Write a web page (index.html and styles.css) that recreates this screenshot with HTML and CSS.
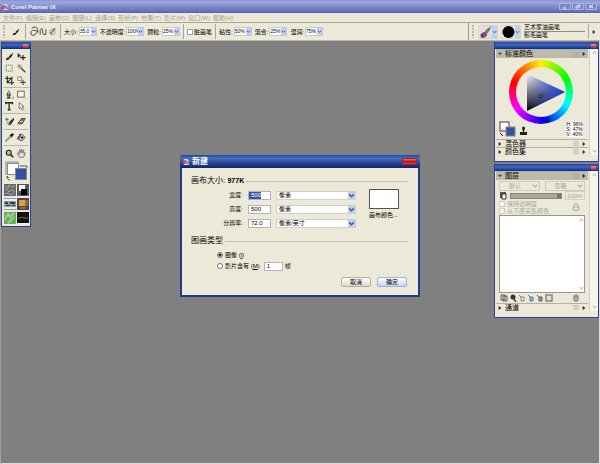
FILE: index.html
```html
<!DOCTYPE html>
<html lang="zh-CN">
<head>
<meta charset="utf-8">
<title>Corel Painter IX</title>
<link rel="stylesheet" href="styles.css">
</head>
<body>
<svg class="defs" aria-hidden="true">
  <defs>
    <symbol id="brush" viewBox="0 0 12 12"><path d="M11 1 7 4 5 6l2 2 2-2zM5 7 2 8 1 11l4-1 2-2z" fill="#222"/></symbol>
    <symbol id="chev" viewBox="0 0 6 6"><path d="M1 2l2 2 2-2" fill="none" stroke="#35549a" stroke-width="1.2"/></symbol>
    <symbol id="box" viewBox="0 0 6 6"><path d="M.5.5h5v5h-5zM2 2l2 2M4 2 2 4" fill="none" stroke="#99978a" stroke-width=".6"/></symbol>
    <symbol id="play" viewBox="0 0 6 6"><path d="M1 0v6l4-3z" fill="#222"/></symbol>
    <symbol id="logo" viewBox="0 0 8 8"><path d="M1 1h4l2 2v5H1z" fill="#e8d8e4"/><path d="M0 3h3v4H0z" fill="#b34a60"/><path d="M4 3h3v4H4z" fill="#d98ea0"/><path d="M2 2l4 5" stroke="#553a62"/></symbol>
  </defs>
</svg>
<div class="app">
  <header class="titlebar">
    <svg class="logo"><use href="#logo"/></svg>
    <h1>Corel Painter IX</h1>
    <div class="winbtns">
      <button aria-label="最小化"><svg viewBox="0 0 8 5"><path d="M2 4h3" stroke="#fff"/></svg></button>
      <button aria-label="还原"><svg viewBox="0 0 8 5"><path d="M2 2h3v2H2zM4 1h2v2" stroke="#fff" fill="none" stroke-width=".7"/></svg></button>
      <button aria-label="关闭"><svg viewBox="0 0 8 5"><path d="M2 1l4 3M6 1 2 4" stroke="#fff"/></svg></button>
    </div>
  </header>
  <nav class="menu">
    <a href="#">文件(F)</a><a href="#">编辑(E)</a><a href="#">画布(C)</a><a href="#">图层(L)</a><a href="#">选择(S)</a><a href="#">形状(P)</a><a href="#">效果(T)</a><a href="#">影片(M)</a><a href="#">窗口(W)</a><a href="#">帮助(H)</a>
  </nav>
  <div class="toolbar">
    <div class="options">
      <i class="grip"></i>
      <svg class="ic wide"><use href="#brush"/></svg>
      <i class="vsep"></i>
      <svg class="strokes" viewBox="0 0 30 14"><path d="M3 3c3-3 8 0 6 4s-7 5-7 1 5-3 8-1" fill="none" stroke="#333"/><path d="M12 10V5l2-2 1 6 3 1V4" fill="none" stroke="#444"/><circle cx="25" cy="7" r="3" fill="none" stroke="#999"/><path d="M28 3 23 9" stroke="#666" stroke-width="1.5"/></svg>
      <i class="vsep"></i>
      <label class="field">大小: <span class="spin"><input value="35.0"><svg><use href="#chev"/></svg></span></label>
      <label class="field">不透明度: <span class="spin"><input value="100%"><svg><use href="#chev"/></svg></span></label>
      <label class="field">颗粒: <span class="spin"><input value="25%"><svg><use href="#chev"/></svg></span></label>
      <i class="vsep"></i>
      <label class="field"><input type="checkbox" class="check">脏画笔</label>
      <i class="vsep"></i>
      <label class="field">粘性: <span class="spin"><input value="50%"><svg><use href="#chev"/></svg></span></label>
      <label class="field">混合: <span class="spin"><input value="25%"><svg><use href="#chev"/></svg></span></label>
      <label class="field">湿润: <span class="spin"><input value="75%"><svg><use href="#chev"/></svg></span></label>
    </div>
    <div class="selector">
      <i class="grip"></i>
      <button class="pick" aria-label="画笔类别"><svg class="art" viewBox="0 0 14 14"><rect width="14" height="14" fill="#dedee2"/><path d="M14 0 8 4 5 8l3 2 4-5z" fill="#8a7468"/><path d="M5 7 1 10l1 4 5-1 2-3z" fill="#4c4a8c"/><path d="M5 8l4 2-2 3-3-2z" fill="#b8404c"/></svg><svg class="dd"><use href="#chev"/></svg></button>
      <button class="pick" aria-label="画笔变体"><svg class="art" viewBox="0 0 14 14"><circle cx="7" cy="7" r="7"/></svg><svg class="dd"><use href="#chev"/></svg></button>
      <div class="names"><span>艺术家油画笔</span><span>鬃毛画笔</span></div>
      <i class="vsep"></i>
      <svg class="go"><use href="#play"/></svg>
    </div>
  </div>
  <main class="desk">
    <section class="win tools" aria-label="工具箱">
      <div class="cap"><button class="x" aria-label="关闭"></button></div>
      <div class="toolbody">
        <div class="tgrid">
          <svg viewBox="0 0 12 12"><use href="#brush"/></svg>
          <svg viewBox="0 0 12 12"><path d="M1 1v7l2-2h3z" fill="#222"/><path d="M8 4v7M4.500 7.500h7" stroke="#222" stroke-width="1.500"/></svg>
          <svg viewBox="0 0 12 12"><path d="M1.500 1.500h8v8h-8z" fill="none" stroke="#555" stroke-dasharray="1.500 1"/><path d="M10 11h1v-1z"/></svg>
          <svg viewBox="0 0 12 12"><path d="M5 5l6 6" stroke="#333" stroke-width="1.500"/><path d="M3 0v7M0 3h7M1 1l4 4M5 1 1 5" stroke="#666" stroke-width=".7"/></svg>
          <svg viewBox="0 0 12 12"><path d="M3 0v9h9M0 3h9v9M10 1 3 9" fill="none" stroke="#222" stroke-width="1.400"/></svg>
          <svg viewBox="0 0 12 12"><path d="M1 1h5v5H1z" fill="none" stroke="#777"/><path d="M8 5v7M4.500 8.500h7" stroke="#444" stroke-width="1.400"/></svg>
        </div>
        <div class="tgrid">
          <svg viewBox="0 0 12 12"><path d="M5 0 2 6l1 3h4l1-3z" fill="#555"/><path d="M5 2v4" stroke="#fff"/><path d="M3 10h4v1H3zM10 11h1v-1z" stroke="#222" stroke-width=".6"/></svg>
          <svg viewBox="0 0 12 12"><path d="M.7 1.500h9v8h-9z" fill="#f8f5e8" stroke="#444"/><path d="M10.500 11.500h1v-1z"/></svg>
          <svg viewBox="0 0 12 12"><path d="M1 3V1h9v2M5.500 1v9M3.500 10.500h4" fill="none" stroke="#222" stroke-width="1.700"/></svg>
          <svg viewBox="0 0 12 12"><path d="M3 1v8l2-2 2 4 1.500-1L7 6h2z" fill="#fff" stroke="#444" stroke-width=".9"/><path d="M10.500 11.500h1v-1z"/></svg>
        </div>
        <div class="tgrid">
          <svg viewBox="0 0 12 12"><path d="M12 1 7 5 4 11l4-1 4-6z" fill="#333"/><path d="M0 3h5M2.500 1v5M5 6 3 9" stroke="#444"/><path d="M10.500 11.500h1v-1z"/></svg>
          <svg viewBox="0 0 12 12"><path d="M6 2h5L7 9H1z" fill="#777" stroke="#333"/><path d="M4 6h4" stroke="#eee"/></svg>
        </div>
        <div class="tgrid">
          <svg viewBox="0 0 12 12"><path d="M7 4 2 9l-1 2 2-1 5-5" fill="#fff" stroke="#444"/><path d="M6 3l3 3 3-4-2-2z" fill="#222"/></svg>
          <svg viewBox="0 0 12 12"><path d="M2 5l4-4 5 5-4 4H4z" fill="#ccc" stroke="#333"/><path d="M2 5 1 9M4 1v5" stroke="#222" stroke-width="1.400"/><circle cx="7" cy="6" r="1.500"/></svg>
        </div>
        <div class="tgrid">
          <svg viewBox="0 0 12 12"><circle cx="5" cy="5" r="3.300" fill="#bbb" stroke="#222" stroke-width="1.500"/><path d="M7.500 7.500 11 11" stroke="#222" stroke-width="2"/></svg>
          <svg viewBox="0 0 12 12"><path d="M3 11 0 6l2-1 1 2V2l1-1 1 4 1-5 1 5 2-4v5l2-1-2 6z" fill="#ddd" stroke="#444" stroke-width=".8"/></svg>
        </div>
        <svg class="fgbg" viewBox="0 0 24 20"><path d="M1 14V1h13" fill="none" stroke="#888"/><rect x="2.500" y="2.500" width="11" height="11" fill="#fff" stroke="#888"/><rect x="10.500" y="7.500" width="11" height="11" fill="#3450a4" stroke="#888"/><path d="M15 5h7v2M2 15v2l2 2h1M2 15l2 2" fill="none" stroke="#555"/></svg>
        <div class="tex">
          <svg viewBox="0 0 12 12"><rect width="12" height="12" fill="#686b6c"/><path d="M1 2l3 2 1-3 3 2 3-1M1 6l2-1 2 3 3-2 3 2M1 10l3-1 2 2 4-2" stroke="#a2a5a2" fill="none"/></svg>
          <svg viewBox="0 0 12 12"><rect width="12" height="12" fill="#55585c"/><path d="M2 1h6v6H2z" fill="#fff"/><path d="M4 5h6v6H4z"/></svg>
          <svg viewBox="0 0 12 12"><rect width="12" height="12" fill="#8e9d9d"/><path d="M0 1h12v2H0zM0 9h12v2H0z" fill="#e9ece8"/><path d="M1 4h3v2H1zM6 4h5v2H6zM2 7h4v1H2zM8 7h3v1H8z" fill="#31424a"/></svg>
          <svg viewBox="0 0 12 12"><rect width="12" height="12" fill="#5a3a5f"/><path d="M2 2h6v6H2z" fill="#d8ac20"/><path d="M8 2h3v6H8zM3 9h6v2H3z" fill="#8a7048"/></svg>
          <svg viewBox="0 0 12 12"><rect width="12" height="12" fill="#6fae60"/><path d="M1 8l3-6 2 3 4-4M4 11l6-6" stroke="#a5d794" stroke-width="1.500" fill="none"/></svg>
          <svg viewBox="0 0 12 12"><rect width="12" height="12" fill="#111"/><path d="M1 6h3l1-1 2 1h4" stroke="#627062" fill="none"/><path d="M0 11.500h12" stroke="#eee"/></svg>
        </div>
      </div>
    </section>

    <div class="dock">
      <section class="win">
        <div class="cap"><button class="x" aria-label="关闭"></button></div>
        <div class="panel">
          <div class="content">
            <h2 class="bar open"><svg class="tri" viewBox="0 0 6 6"><path d="M0 1h6L3 5z" fill="#444"/></svg><span>标准颜色</span><svg><use href="#box"/></svg><svg><use href="#play"/></svg></h2>
            <div class="colors">
              <div class="wheel"><svg viewBox="0 0 64 64">
                <defs><linearGradient id="tb" x1="0" y1="0" x2="1" y2="0"><stop offset="0" stop-color="#1a3cc8" stop-opacity="0"/><stop offset="1" stop-color="#1b3ed8"/></linearGradient><linearGradient id="tg" x1="0" y1="0" x2="0" y2="1"><stop offset="0" stop-color="#f4f6fc"/><stop offset="1" stop-color="#000"/></linearGradient></defs>
                <circle cx="32" cy="32" r="25" fill="#ece9d8"/>
                <path d="M18 14v37l38-19z" fill="url(#tg)"/><path d="M18 14v37l38-19z" fill="url(#tb)"/>
                <circle cx="32" cy="36" r="1.800" fill="none" stroke="#222" stroke-width=".8"/><circle cx="39" cy="60" r="2" fill="none" stroke="#001"/></svg></div>
              <svg class="cs" viewBox="0 0 28 16"><rect x="1" y="1" width="9" height="9" fill="#fff" stroke="#777" stroke-width="1.500"/><rect x="7" y="6" width="9" height="9" fill="#3450a4" stroke="#888"/><path d="M1 12l3 3" stroke="#222"/><path d="M23 7a1.500 1.500 0 0 1 3 0l-1 4h3v3h-7v-3h3z" fill="#222"/></svg>
              <div class="hsv"><span>H: 96%</span><span>S: 47%</span><span>V: 40%</span></div>
            </div>
            <h2 class="bar"><svg class="tri"><use href="#play"/></svg><span>混色器</span><svg><use href="#box"/></svg><svg><use href="#play"/></svg></h2>
            <h2 class="bar"><svg class="tri"><use href="#play"/></svg><span>颜色集</span><svg><use href="#box"/></svg><svg><use href="#play"/></svg></h2>
          </div>
          <div class="scroll"><i></i><i></i></div>
        </div>
        <div class="foot"></div>
      </section>

      <section class="win">
        <div class="cap"><button class="x" aria-label="关闭"></button></div>
        <div class="panel">
          <div class="content">
            <h2 class="bar open"><svg class="tri" viewBox="0 0 6 6"><path d="M0 1h6L3 5z" fill="#444"/></svg><span>图层</span><svg><use href="#box"/></svg><svg><use href="#play"/></svg></h2>
            <div class="layers">
              <div class="pair">
                <span class="drop"><select aria-label="混合方式" disabled><option>默认</option></select><svg><use href="#chev"/></svg></span>
                <span class="drop"><select aria-label="混合深度" disabled><option>忽略</option></select><svg><use href="#chev"/></svg></span>
              </div>
              <div class="opacity">
                <svg viewBox="0 0 8 8"><path d="M1 0h6v6H1z" fill="#555"/><path d="M3 2h4v5H3z" fill="#fff" stroke="#333"/></svg>
                <input type="range" aria-label="不透明度" value="100" disabled>
                <input class="pct" aria-label="不透明度值" value="100%" disabled>
              </div>
              <div class="locks">
                <div><label><input type="checkbox" class="check" disabled>保持透明度</label><label><input type="checkbox" class="check" disabled>从下层采集颜色</label></div>
                <svg viewBox="0 0 8 8"><path d="M1 4h6v3H1zM2 4V2l1-1h2l1 1v2" fill="none" stroke="#aaa798"/></svg>
              </div>
              <div class="list"><div class="scroll plain"><i></i><i></i></div></div>
              <div class="acts">
                <svg viewBox="0 0 8 8"><path d="M1 1h4v5H1zM3 2h4v5H3z" fill="#ddd" stroke="#444" stroke-width=".8"/></svg>
                <svg viewBox="0 0 8 8"><circle cx="4" cy="3" r="2.500" fill="#333"/><path d="M4 4l3 4" stroke="#444" stroke-width="1.500"/></svg>
                <svg viewBox="0 0 8 8"><path d="M1 1l2 2M3 3h3v4H3z" fill="#eee" stroke="#888"/></svg>
                <svg viewBox="0 0 8 8"><path d="M1 1l2 2M3 3h3v4H3z" fill="#8bb5d2" stroke="#5583a2"/></svg>
                <svg viewBox="0 0 8 8"><path d="M1 1l2 2M3 3h3v4H3z" fill="#89a" stroke="#566"/></svg>
                <svg viewBox="0 0 8 8"><path d="M1 1h6v6H1z" fill="#ddd" stroke="#888" stroke-width="1.500"/></svg>
                <svg class="trash" viewBox="0 0 8 8"><path d="M1 2h6M3 1h2M2 3h4v4H2zM4 3v4" fill="none" stroke="#777"/></svg>
              </div>
            </div>
            <h2 class="bar"><svg class="tri"><use href="#play"/></svg><span>通道</span><svg><use href="#box"/></svg><svg><use href="#play"/></svg></h2>
          </div>
          <div class="scroll"><i></i><i></i></div>
        </div>
        <div class="foot"></div>
      </section>
    </div>

    <form class="dialog" role="dialog" aria-label="新建">
      <div class="dcap"><svg class="logo"><use href="#logo"/></svg><strong>新建</strong><button type="button" class="x" aria-label="关闭"></button></div>
      <div class="dbody">
        <h2 class="rule"><span>画布大小: <b>977K</b></span></h2>
        <div class="size">
          <div class="rows">
            <label for="w">宽度:</label><input id="w" class="sel" value="500"><span class="combo"><select aria-label="宽度单位"><option>像素</option></select><svg><use href="#chev"/></svg></span>
            <label for="h">高度:</label><input id="h" value="500"><span class="combo"><select aria-label="高度单位"><option>像素</option></select><svg><use href="#chev"/></svg></span>
            <label for="r">分辨率:</label><input id="r" value="72.0"><span class="combo"><select aria-label="分辨率单位"><option>像素/英寸</option></select><svg><use href="#chev"/></svg></span>
          </div>
          <button type="button" class="paper"><i></i>画布颜色...</button>
        </div>
        <h2 class="rule second"><span>图画类型</span></h2>
        <div class="types">
          <label><input type="radio" name="t" checked><span>图像 (<u>I</u>)</span></label>
          <div class="movie"><label><input type="radio" name="t"><span>影片含有 (<u>M</u>)</span></label><input id="frames" value="1"><label for="frames">帧</label></div>
        </div>
        <div class="btns"><button type="button">取消</button><button type="button" class="ok">确定</button></div>
      </div>
    </form>
  </main>
</div>
</body>
</html>
```
FILE: styles.css
```css
* { box-sizing: border-box; }
html, body { height: 100%; margin: 0; }
body, input, button, select {
  font-family: "Liberation Sans", "Noto Sans CJK SC", sans-serif;
  font-size: 6px;
  line-height: 8px;
  color: #000;
}
input, button, select { margin: 0; padding: 0; border: 0; border-radius: 0; appearance: none; background: none; }
h1, h2 { margin: 0; font-weight: normal; }
svg { display: block; flex: none; }
.defs { position: absolute; width: 0; height: 0; }
.app { display: flex; flex-direction: column; min-height: 100vh; background: #ece9d8; }

.titlebar {
  display: flex; align-items: center; gap: 2px; height: 13px; padding: 0 3px 0 2px;
  background: linear-gradient(#8796d6, #99a6dd 20%, #7986c9 55%, #6670b4 90%, #535ba0);
}
.logo { width: 7px; height: 7px; }
.titlebar h1 { flex: 1; font-size: 6px; line-height: 10px; font-weight: bold; color: #f1f3ff; }
.winbtns { display: flex; gap: 1px; }
.winbtns button { width: 12px; height: 7px; border: 1px solid #aab3e2; border-radius: 1px; background: #7b87c6; }
.winbtns svg { width: 10px; height: 5px; }
.menu { display: flex; align-items: center; gap: 3px; height: 9px; padding: 0 3px; }
.menu a { min-width: 20px; color: #a5a294; text-decoration: none; white-space: nowrap; }

.toolbar { display: flex; height: 19px; border-top: 1px solid #aaa798; border-bottom: 1px solid #bbb8a8; }
.options { flex: 1; display: flex; align-items: center; gap: 3px; padding-left: 3px; }
.grip { width: 3px; height: 13px; background: radial-gradient(circle at 1px 1px, #bdb9a7 1px, transparent 1px) 0 0 / 3px 3px; }
.ic { width: 8px; height: 8px; }
.ic.wide { margin: 0 2px 0 3px; }
.vsep { width: 1px; height: 15px; background: #aaa798; }
.strokes { width: 28px; height: 14px; }
.field { display: flex; align-items: center; gap: 1px; white-space: nowrap; }
.spin { display: flex; height: 9px; border: 1px solid #c5cad2; background: #fff; }
.spin input { width: 11px; font-size: 5px; line-height: 7px; }
.spin svg, .dd { width: 5px; background: #bdd0f8; height: 100%; }
.check { width: 6px; height: 6px; border: 1px solid #999f9f; background: #fff; }
.selector { display: flex; align-items: center; gap: 3px; width: 132px; padding: 0 4px 0 3px; border-left: 1px solid #999688; }
.pick { display: flex; height: 14px; border: 1px solid #d5d5cf; background: #ece9d8; }
.pick .art { width: 13px; height: 12px; }
.names { flex: 1; display: flex; flex-direction: column; line-height: 7px; }
.names span + span { border-top: 1px solid #8f8c7e; }
.go { width: 4px; height: 6px; }

.desk { flex: 1; position: relative; background: #808080; border: solid #dddcd2; border-width: 0 1px 1px 0; border-left: 1px solid #a5a293; }
.win { background: #ece9d8; border: 1px solid #29418e; border-top: 0; }
.cap { display: flex; justify-content: flex-end; align-items: center; height: 7px; padding: 0 2px; background: linear-gradient(#2947a8, #3d66c5 45%, #102a78); }
.x { width: 5px; height: 4px; background: linear-gradient(#ef8d8d, #c61f22); }
.tools { position: absolute; left: 0; top: 1px; width: 30px; }
.toolbody { padding: 2px 1px; }
.tgrid { display: grid; grid-template-columns: 10px 10px; justify-content: center; gap: 3px 2px; padding: 1px 0 2px; border-bottom: 1px solid #bbb8a9; }
.tgrid svg { width: 9px; height: 9px; }
.tgrid:nth-child(2) { padding: 2px 0; }
.tgrid:nth-child(n+3) { padding: 3px 0; }
.tgrid:nth-child(5) { border: 0; }
.fgbg { width: 24px; height: 20px; margin: 0 0 3px 2px; }
.tex { display: grid; grid-template-columns: 12px 12px; justify-content: center; gap: 2px 1px; }
.tex svg { width: 12px; height: 12px; }

.dock { position: absolute; right: 0; top: 1px; width: 105px; display: flex; flex-direction: column; gap: 2px; }
.panel { display: flex; }
.content { flex: 1; min-width: 0; padding: 0 1px; }
.bar { display: flex; align-items: center; gap: 3px; height: 8px; padding: 0 2px; border-top: 1px solid #b5b2a4; font-size: 7px; line-height: 8px; }
.bar span { flex: 1; }
.bar svg { width: 4px; height: 4px; }
.bar.open { height: 9px; background: #bdbaa9; }
.bar svg:nth-of-type(2) { width: 6px; height: 5px; }
.scroll { display: flex; flex-direction: column; justify-content: space-between; align-items: center; width: 9px; padding: 3px 0; border-left: 1px solid #d5d2c4; background: #f5f4ee; }
.scroll i { width: 3px; height: 3px; border: solid #b9b8b0; border-width: 1px 0 0 1px; rotate: 45deg; }
.scroll i + i { rotate: 225deg; }
.foot { height: 6px; }
.colors { display: grid; grid-template-columns: auto 1fr; align-items: end; height: 81px; padding: 2px 5px 2px 3px; }
.wheel {
  grid-column: 1 / 3; justify-self: center; align-self: start; width: 64px; height: 64px; border-radius: 50%; margin-bottom: -9px;
  background: conic-gradient(#fff000, #0f0 60deg, #0ff 115deg, #00f 175deg, #f0f 235deg, #f00 290deg, #fff000);
}
.wheel svg { width: 64px; height: 64px; }
.cs { width: 28px; height: 16px; }
.hsv { justify-self: end; display: flex; flex-direction: column; font-size: 5px; line-height: 5px; background: #fff; }

.layers { padding: 1px 3px 0; color: #aaa798; }
.pair { display: grid; grid-template-columns: 1fr 1fr; gap: 5px; }
.drop { display: flex; align-items: center; height: 10px; border: 1px solid #cfcbbb; }
.drop select { flex: 1; min-width: 0; padding-left: 9px; line-height: 8px; color: #aaa798; opacity: 1; }
.drop svg { width: 6px; height: 6px; margin-right: 1px; opacity: .4; }
.opacity { display: flex; align-items: center; gap: 3px; height: 9px; }
.opacity > svg { width: 8px; height: 8px; }
.opacity input[type=range] { flex: 1; min-width: 0; height: 6px; border: 1px solid #85847b; background: #aaa89c; }
.opacity input[type=range]::-webkit-slider-thumb { appearance: none; width: 4px; height: 4px; background: #77756d; }
.pct { width: 20px; height: 9px; border: 1px solid #d4d1c4; text-align: center; color: #aaa798; }
.locks { display: flex; align-items: center; justify-content: space-between; padding-right: 5px; }
.locks label { display: flex; align-items: center; gap: 2px; height: 7px; white-space: nowrap; }
.locks .check { border-color: #d0cdbe; background: #f7f6f0; }
.locks > svg { width: 8px; height: 8px; }
.list { display: flex; justify-content: flex-end; height: 78px; margin-top: 1px; border: 1px solid #98968a; background: #fff; }
.plain { width: 6px; border: 0; background: #fff; }
.acts { display: flex; align-items: center; gap: 1px; height: 10px; padding: 0 5px 0 1px; }
.acts svg { width: 8px; height: 8px; }
.acts .trash { margin-left: auto; }

.dialog { position: absolute; left: calc(50% - 120px); top: 114px; width: 240px; border: 2px solid #203c87; border-top: 0; border-radius: 3px 3px 0 0; background: #ece9d8; }
.dcap { display: flex; align-items: center; gap: 2px; height: 13px; margin: 0 -2px; padding: 0 3px; border-radius: 3px 3px 0 0; background: linear-gradient(#20459e, #4770c4 25%, #284894 60%, #10256b); }
.dcap strong { flex: 1; font-size: 8px; line-height: 12px; color: #fff; }
.dcap .x { width: 15px; height: 7px; border: 1px solid #8d2440; background: linear-gradient(#e77774, #cc1015 50%, #d93b38); }
.dbody { padding: 8px 10px 8px 9px; }
.rule { display: flex; align-items: center; gap: 2px; font-size: 8px; line-height: 10px; }
.rule b { font-size: 7px; }
.rule::after { content: ""; flex: 1; height: 1px; background: #c5c2b2; }
.size { display: flex; gap: 13px; padding: 2px 0 0; }
.rows { display: grid; grid-template-columns: 52px 23px 80px; column-gap: 5px; grid-auto-rows: 14px; align-items: center; }
.rows label { text-align: right; }
.dbody input:not([type=radio]) { height: 9px; padding: 0 2px; border: 1px solid #b1b5b7; background: #fff; }
.dbody input.sel { color: #fff; background: linear-gradient(90deg, #3853a0 12px, #fff 12px); }
.combo { display: flex; height: 9px; border: 1px solid #cdd0d0; background: #fff; }
.combo select { flex: 1; padding-left: 2px; line-height: 7px; }
.combo svg { width: 7px; height: 7px; background: #bfd0f7; }
.paper { align-self: start; white-space: nowrap; text-align: left; padding-top: 1px; }
.paper i { display: block; width: 30px; height: 20px; margin-bottom: 2px; border: 1px solid #555; background: #fff; }
.second { margin-top: 6px; }
.types { display: flex; flex-direction: column; gap: 1px; padding: 4px 0 0 26px; }
.types label { display: flex; align-items: center; height: 10px; gap: 2px; }
.types input[type=radio] { width: 6px; height: 6px; border: 1px solid #667788; border-radius: 50%; background: #fff; }
.types input[type=radio]:checked { background: radial-gradient(circle, #223 1px, #fff 2px); }
.movie { display: flex; align-items: center; gap: 2px; }
.movie > input { width: 19px; margin-left: 2px; }
.btns { display: flex; justify-content: flex-end; gap: 6px; margin-top: 6px; padding-right: 1px; }
.btns button { width: 30px; height: 10px; border: 1px solid #b3b0a8; border-radius: 2px; background: linear-gradient(#fff, #dcd9cf); }
.btns .ok { border-color: #a0b1dc; background: linear-gradient(#fff, #c6d3f5); }
```
